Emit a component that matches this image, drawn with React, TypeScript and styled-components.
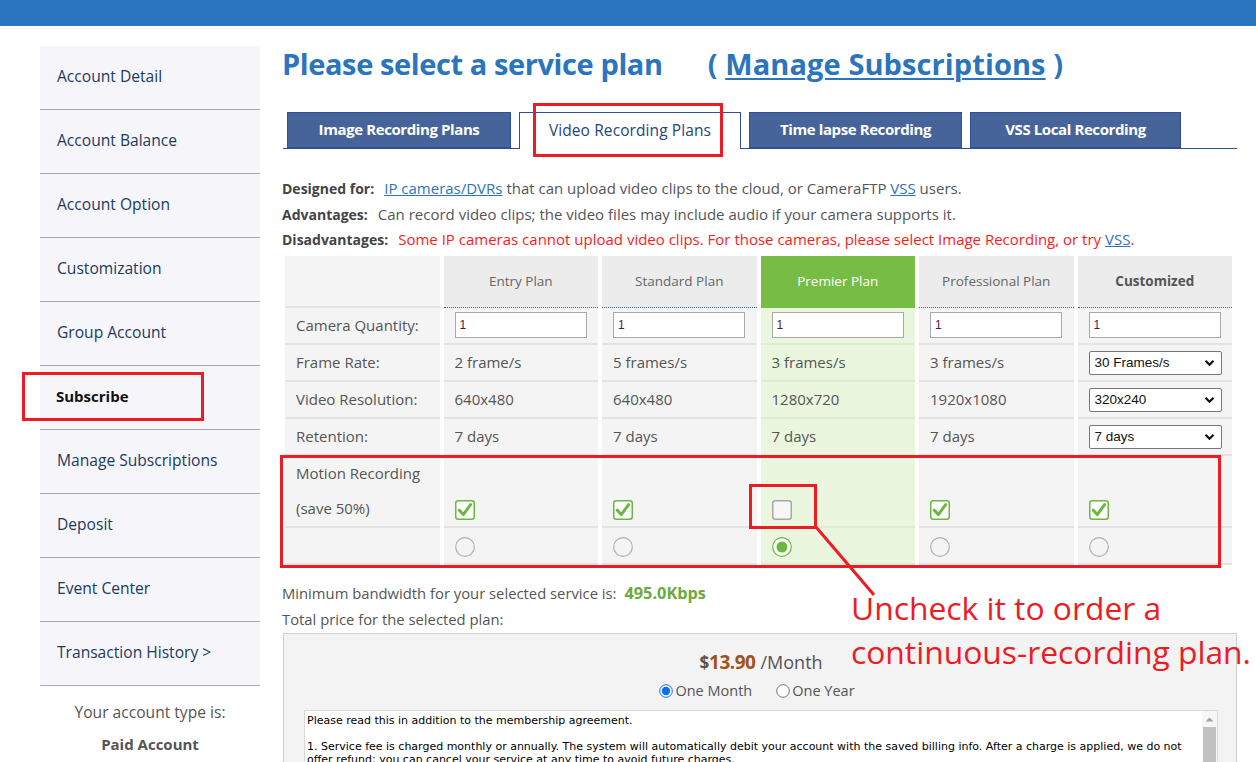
import React from "react";
import styled, { createGlobalStyle, css } from "styled-components";

const GlobalStyle = createGlobalStyle`
  html, body { margin: 0; padding: 0; overflow: hidden; background: #fff; }
  body { font-family: "Open Sans", "Liberation Sans", sans-serif; }
  * { box-sizing: border-box; }
`;

const Page = styled.div`
  position: relative;
  width: 1256px;
  height: 762px;
  overflow: hidden;
`;

const TopBar = styled.div`
  height: 26px;
  background: #2b74be;
`;

const Layout = styled.div`
  display: flex;
  gap: 22px;
  padding: 20px 0 0 40px;
`;

const Sidebar = styled.nav`
  width: 220px;
  flex: none;
  display: flex;
  flex-direction: column;
`;

const NavItem = styled.div<{ $active?: boolean }>`
  height: 64px;
  display: flex;
  align-items: center;
  padding: 0 0 3px 17px;
  background: #f6f6fa;
  border-bottom: 1px solid #a9a9b1;
  font-size: 15.6px;
  color: ${(p) => (p.$active ? "#111" : "#1b3a60")};
  font-weight: ${(p) => (p.$active ? 700 : 400)};
  white-space: nowrap;
  ${(p) => p.$active && css`padding-left: 16px; font-size: 15px;`}
`;

const AccountType = styled.div`
  padding-top: 14px;
  text-align: center;
  font-size: 15.6px;
  line-height: 24px;
  color: #555;
`;

const AccountName = styled.div`
  margin-top: 8px;
  font-size: 15px;
  font-weight: 700;
`;

const Main = styled.main`
  width: 955px;
  flex: none;
`;

const TitleRow = styled.div`
  display: flex;
  align-items: baseline;
  gap: 45px;
  height: 36px;
  line-height: 36px;
  font-size: 29px;
  font-weight: 700;
  color: #2b74be;
  letter-spacing: -0.4px;
  white-space: nowrap;
`;

const TitleAside = styled.span`
  letter-spacing: 0.1px;
`;

const TitleLink = styled.a`
  color: #2b74be;
  text-decoration: underline;
  text-decoration-thickness: 2px;
  text-underline-offset: 3px;
`;

const TabBar = styled.div`
  display: flex;
  align-items: flex-end;
  gap: 8px;
  height: 37px;
  margin: 30px 0 0 1px;
  padding-left: 4px;
  border-bottom: 1px solid #2c4f96;
`;

const Tab = styled.div<{ $active?: boolean; $w: number }>`
  width: ${(p) => p.$w}px;
  height: 36px;
  display: flex;
  align-items: center;
  justify-content: center;
  padding-bottom: 2px;
  font-size: 15px;
  letter-spacing: -0.4px;
  border: 1px solid #2c4f96;
  white-space: nowrap;
  ${(p) =>
    p.$active
      ? css`
          height: 37px;
          margin-bottom: -1px;
          padding-bottom: 3px;
          border-bottom: none;
          background: #fff;
          color: #26457e;
          font-size: 15.5px;
          letter-spacing: 0.1px;
        `
      : css`
          background: #47649a;
          color: #fff;
          font-weight: 700;
        `}
`;

const Info = styled.div`
  margin-top: 27px;
  font-size: 15px;
  line-height: 25.5px;
  color: #555;
`;

const InfoRow = styled.div<{ $warn?: boolean }>`
  white-space: nowrap;
  color: ${(p) => (p.$warn ? "#ff1a1a" : "#555")};
`;

const InfoLabel = styled.b`
  font-size: 14px;
  color: #444;
  margin-right: 10px;
`;

const Link = styled.a`
  color: #2b74be;
  text-decoration: underline;
`;

const PlanGrid = styled.div`
  display: grid;
  width: 947px;
  margin: 3px 0 0 3px;
  grid-template-columns: repeat(6, 1fr);
  grid-template-rows: 52px 37px 37px 37px 37px 72px 37px;
  column-gap: 4px;
`;

type Tone = "label" | "plan" | "premier";

const Cell = styled.div<{ $tone: Tone; $head?: boolean; $motion?: boolean; $pick?: boolean }>`
  display: flex;
  align-items: center;
  padding-left: 11px;
  font-size: 15px;
  color: #555;
  background: ${(p) => (p.$tone === "premier" ? "#eaf7de" : "#f4f4f4")};
  border-bottom: 2px solid ${(p) => (p.$tone === "premier" ? "#dcedcf" : "#e3e3e3")};
  white-space: nowrap;
  ${(p) =>
    p.$head &&
    p.$tone !== "label" &&
    css`
      justify-content: center;
      padding-left: 0;
      font-size: 13.5px;
      background: ${p.$tone === "premier" ? "#77bd45" : "#ececec"};
      border-bottom: 1px ${p.$tone === "premier" ? "solid #77bd45" : "dotted #3a5f9a"};
      color: ${p.$tone === "premier" ? "#fff" : "#666"};
    `}
  ${(p) =>
    p.$motion &&
    css`
      align-items: flex-end;
      padding-bottom: 6px;
    `}
  ${(p) =>
    p.$pick &&
    css`
      padding-top: 3px;
    `}
`;

const HeadText = styled.span<{ $strong?: boolean }>`
  font-weight: ${(p) => (p.$strong ? 700 : 400)};
  color: ${(p) => (p.$strong ? "#555" : "inherit")};
`;

const MotionLabel = styled.div`
  display: flex;
  flex-direction: column;
  align-self: flex-start;
  line-height: 35px;
`;

const QtyInput = styled.input`
  width: 132px;
  height: 26px;
  border: 1px solid #a9a9a9;
  padding: 0 4px;
  font-family: "Liberation Sans", sans-serif;
  font-size: 12px;
  color: #4a1b3c;
  background: #fff;
  outline: none;
`;

const SelectBox = styled.div`
  width: 133px;
  height: 24px;
  margin-top: 1px;
  display: flex;
  align-items: center;
  justify-content: space-between;
  padding: 0 6px 0 5px;
  border: 1px solid #767676;
  border-radius: 2px;
  background: #fff;
  font-family: "Liberation Sans", sans-serif;
  font-size: 13.5px;
  color: #111;
`;

const Below = styled.div`
  margin-top: 15px;
  font-size: 14.8px;
  line-height: 26px;
  color: #555;
  white-space: nowrap;
`;

const Bandwidth = styled.b`
  margin-left: 8px;
  font-size: 16.3px;
  color: #6aab3b;
`;

const PriceBox = styled.div`
  width: 954px;
  height: 160px;
  margin: 1px 0 0 1px;
  padding: 14px 18px 0 20px;
  background: #f3f3f3;
  border: 1px solid #cfcfcf;
`;

const PriceLine = styled.div`
  text-align: center;
  line-height: 28px;
  color: #555;
`;

const Dollar = styled.span`
  font-size: 17px;
  font-weight: 700;
  color: #5e5148;
`;

const Amount = styled.span`
  font-size: 19px;
  font-weight: 700;
  letter-spacing: -0.5px;
  color: #a0521c;
`;

const Per = styled.span`
  margin-left: 5px;
  font-size: 18px;
  color: #555;
`;

const PeriodRow = styled.div`
  display: flex;
  justify-content: center;
  gap: 24px;
  height: 28px;
  padding-right: 8px;
  align-items: center;
  font-size: 14.5px;
  color: #555;
`;

const PeriodOption = styled.label`
  display: flex;
  align-items: center;
  gap: 2px;
`;

const Terms = styled.div`
  display: flex;
  height: 80px;
  margin-top: 5px;
  background: #fff;
  border: 1px solid #d9d9d9;
`;

const TermsText = styled.div`
  flex: 1;
  padding: 3px 2px;
  font-family: "DejaVu Sans", sans-serif;
  font-size: 11px;
  line-height: 13px;
  color: #000;
  white-space: pre;
  overflow: hidden;
`;

const ScrollTrack = styled.div`
  width: 15px;
  flex: none;
  display: flex;
  flex-direction: column;
  align-items: center;
  padding: 6px 1px 0;
  background: #f6f6f6;
`;

const ScrollThumb = styled.div`
  width: 13px;
  flex: 1;
  margin-top: 5px;
  background: #c1c1c1;
`;

const Overlay = styled.div`
  position: absolute;
  inset: 0;
  pointer-events: none;
`;

const RedFrame = styled.div<{ $x: number; $y: number; $w: number; $h: number }>`
  position: absolute;
  left: ${(p) => p.$x}px;
  top: ${(p) => p.$y}px;
  width: ${(p) => p.$w}px;
  height: ${(p) => p.$h}px;
  border: 3px solid #ed1c24;
`;

const Leader = styled.svg`
  position: absolute;
  left: 0;
  top: 0;
`;

const Callout = styled.div`
  position: absolute;
  left: 851px;
  top: 586px;
  font-family: "Open Sans", Lato, sans-serif;
  font-size: 31.8px;
  line-height: 44px;
  color: #ed1c24;
  white-space: nowrap;
`;

const Check = ({ on }: { on: boolean }) => (
  <svg width="20" height="20" viewBox="0 0 20 20">
    <rect
      x="0.75"
      y="0.75"
      width="18.5"
      height="18.5"
      rx="2.5"
      fill={on ? "#fff" : "#f7f7f7"}
      stroke={on ? "#6bb840" : "#a8a8a8"}
      strokeWidth="1.5"
    />
    {on && (
      <path
        d="M4.3 10.2 L8.3 14.6 L15.6 4.6"
        fill="none"
        stroke="#6bb840"
        strokeWidth="3"
        strokeLinecap="round"
        strokeLinejoin="round"
      />
    )}
  </svg>
);

const PlanRadio = ({ on }: { on: boolean }) => (
  <svg width="20" height="20" viewBox="0 0 20 20">
    <circle cx="10" cy="10" r="9.3" fill={on ? "#fff" : "none"} stroke={on ? "#6bb840" : "#b0b0b0"} strokeWidth="1.2" />
    {on && <circle cx="10" cy="10" r="5.5" fill="#6bb840" />}
  </svg>
);

const SmallRadio = ({ on }: { on: boolean }) => (
  <svg width="14" height="14" viewBox="0 0 14 14">
    <circle cx="7" cy="7" r="6.3" fill="#fff" stroke={on ? "#0a6fe8" : "#777"} strokeWidth="1" />
    {on && <circle cx="7" cy="7" r="4.2" fill="#0a6fe8" />}
  </svg>
);

const Chevron = () => (
  <svg width="11" height="8" viewBox="0 0 11 8">
    <path d="M1.5 1.8 L5.5 5.8 L9.5 1.8" fill="none" stroke="#111" strokeWidth="2.2" />
  </svg>
);

type Plan = {
  name: string;
  tone: Tone;
  fr: string;
  res: string;
  ret: string;
  motion: boolean;
  selected: boolean;
  custom?: boolean;
};

const plans: Plan[] = [
  { name: "Entry Plan", tone: "plan", fr: "2 frame/s", res: "640x480", ret: "7 days", motion: true, selected: false },
  { name: "Standard Plan", tone: "plan", fr: "5 frames/s", res: "640x480", ret: "7 days", motion: true, selected: false },
  { name: "Premier Plan", tone: "premier", fr: "3 frames/s", res: "1280x720", ret: "7 days", motion: false, selected: true },
  { name: "Professional Plan", tone: "plan", fr: "3 frames/s", res: "1920x1080", ret: "7 days", motion: true, selected: false },
  { name: "Customized", tone: "plan", fr: "30 Frames/s", res: "320x240", ret: "7 days", motion: true, selected: false, custom: true },
];

const navItems = [
  "Account Detail",
  "Account Balance",
  "Account Option",
  "Customization",
  "Group Account",
  "Subscribe",
  "Manage Subscriptions",
  "Deposit",
  "Event Center",
  "Transaction History >",
];

const tabs = [
  { label: "Image Recording Plans", w: 224 },
  { label: "Video Recording Plans", w: 222, active: true },
  { label: "Time lapse Recording", w: 213 },
  { label: "VSS Local Recording", w: 211 },
];

const valueCell = (p: Plan, v: string) =>
  p.custom ? (
    <SelectBox>
      <span>{v}</span>
      <Chevron />
    </SelectBox>
  ) : (
    v
  );

export default function App() {
  const rows: { label: string; render: (p: Plan) => React.ReactNode }[] = [
    { label: "Camera Quantity:", render: () => <QtyInput readOnly value="1" /> },
    { label: "Frame Rate:", render: (p) => valueCell(p, p.fr) },
    { label: "Video Resolution:", render: (p) => valueCell(p, p.res) },
    { label: "Retention:", render: (p) => valueCell(p, p.ret) },
  ];

  return (
    <Page>
      <GlobalStyle />
      <TopBar />
      <Layout>
        <Sidebar>
          {navItems.map((n) => (
            <NavItem key={n} $active={n === "Subscribe"}>
              {n}
            </NavItem>
          ))}
          <AccountType>
            Your account type is:
            <AccountName>Paid Account</AccountName>
          </AccountType>
        </Sidebar>

        <Main>
          <TitleRow>
            <span>Please select a service plan</span>
            <TitleAside>
              ( <TitleLink>Manage Subscriptions</TitleLink> )
            </TitleAside>
          </TitleRow>

          <TabBar>
            {tabs.map((t) => (
              <Tab key={t.label} $w={t.w} $active={t.active}>
                {t.label}
              </Tab>
            ))}
          </TabBar>

          <Info>
            <InfoRow>
              <InfoLabel>Designed for:</InfoLabel>
              <Link>IP cameras/DVRs</Link> that can upload video clips to the cloud, or CameraFTP <Link>VSS</Link> users.
            </InfoRow>
            <InfoRow>
              <InfoLabel>Advantages:</InfoLabel>
              Can record video clips; the video files may include audio if your camera supports it.
            </InfoRow>
            <InfoRow $warn>
              <InfoLabel>Disadvantages:</InfoLabel>
              Some IP cameras cannot upload video clips. For those cameras, please select Image Recording, or try{" "}
              <Link>VSS</Link>.
            </InfoRow>
          </Info>

          <PlanGrid>
            <Cell $tone="label" />
            {plans.map((p) => (
              <Cell key={p.name} $tone={p.tone} $head>
                <HeadText $strong={p.custom}>{p.name}</HeadText>
              </Cell>
            ))}

            {rows.map((r) => (
              <React.Fragment key={r.label}>
                <Cell $tone="label">{r.label}</Cell>
                {plans.map((p) => (
                  <Cell key={p.name} $tone={p.tone}>
                    {r.render(p)}
                  </Cell>
                ))}
              </React.Fragment>
            ))}

            <Cell $tone="label">
              <MotionLabel>
                <span>Motion Recording</span>
                <span>(save 50%)</span>
              </MotionLabel>
            </Cell>
            {plans.map((p) => (
              <Cell key={p.name} $tone={p.tone} $motion>
                <Check on={p.motion} />
              </Cell>
            ))}

            <Cell $tone="label" />
            {plans.map((p) => (
              <Cell key={p.name} $tone={p.tone} $pick>
                <PlanRadio on={p.selected} />
              </Cell>
            ))}
          </PlanGrid>

          <Below>
            Minimum bandwidth for your selected service is:<Bandwidth>495.0Kbps</Bandwidth>
            <div>Total price for the selected plan:</div>
          </Below>

          <PriceBox>
            <PriceLine>
              <Dollar>$</Dollar>
              <Amount>13.90</Amount>
              <Per>/Month</Per>
            </PriceLine>
            <PeriodRow>
              <PeriodOption>
                <SmallRadio on />
                One Month
              </PeriodOption>
              <PeriodOption>
                <SmallRadio on={false} />
                One Year
              </PeriodOption>
            </PeriodRow>
            <Terms>
              <TermsText>
                {"Please read this in addition to the membership agreement.\n\n1. Service fee is charged monthly or annually. The system will automatically debit your account with the saved billing info. After a charge is applied, we do not\noffer refund; you can cancel your service at any time to avoid future charges."}
              </TermsText>
              <ScrollTrack>
                <svg width="9" height="5" viewBox="0 0 9 5">
                  <path d="M0.5 4.5 L4.5 0.5 L8.5 4.5 Z" fill="#a3a3a3" />
                </svg>
                <ScrollThumb />
              </ScrollTrack>
            </Terms>
          </PriceBox>
        </Main>
      </Layout>

      <Overlay>
        <RedFrame $x={22} $y={372} $w={182} $h={49} />
        <RedFrame $x={533} $y={103} $w={190} $h={54} />
        <RedFrame $x={280} $y={455} $w={941} $h={113} />
        <RedFrame $x={749} $y={484} $w={68} $h={45} />
        <Leader width="1256" height="762" viewBox="0 0 1256 762">
          <line x1="816" y1="527" x2="874" y2="595" stroke="#ed1c24" strokeWidth="3" />
        </Leader>
        <Callout>
          Uncheck it to order a
          <br />
          continuous-recording plan.
        </Callout>
      </Overlay>
    </Page>
  );
}
